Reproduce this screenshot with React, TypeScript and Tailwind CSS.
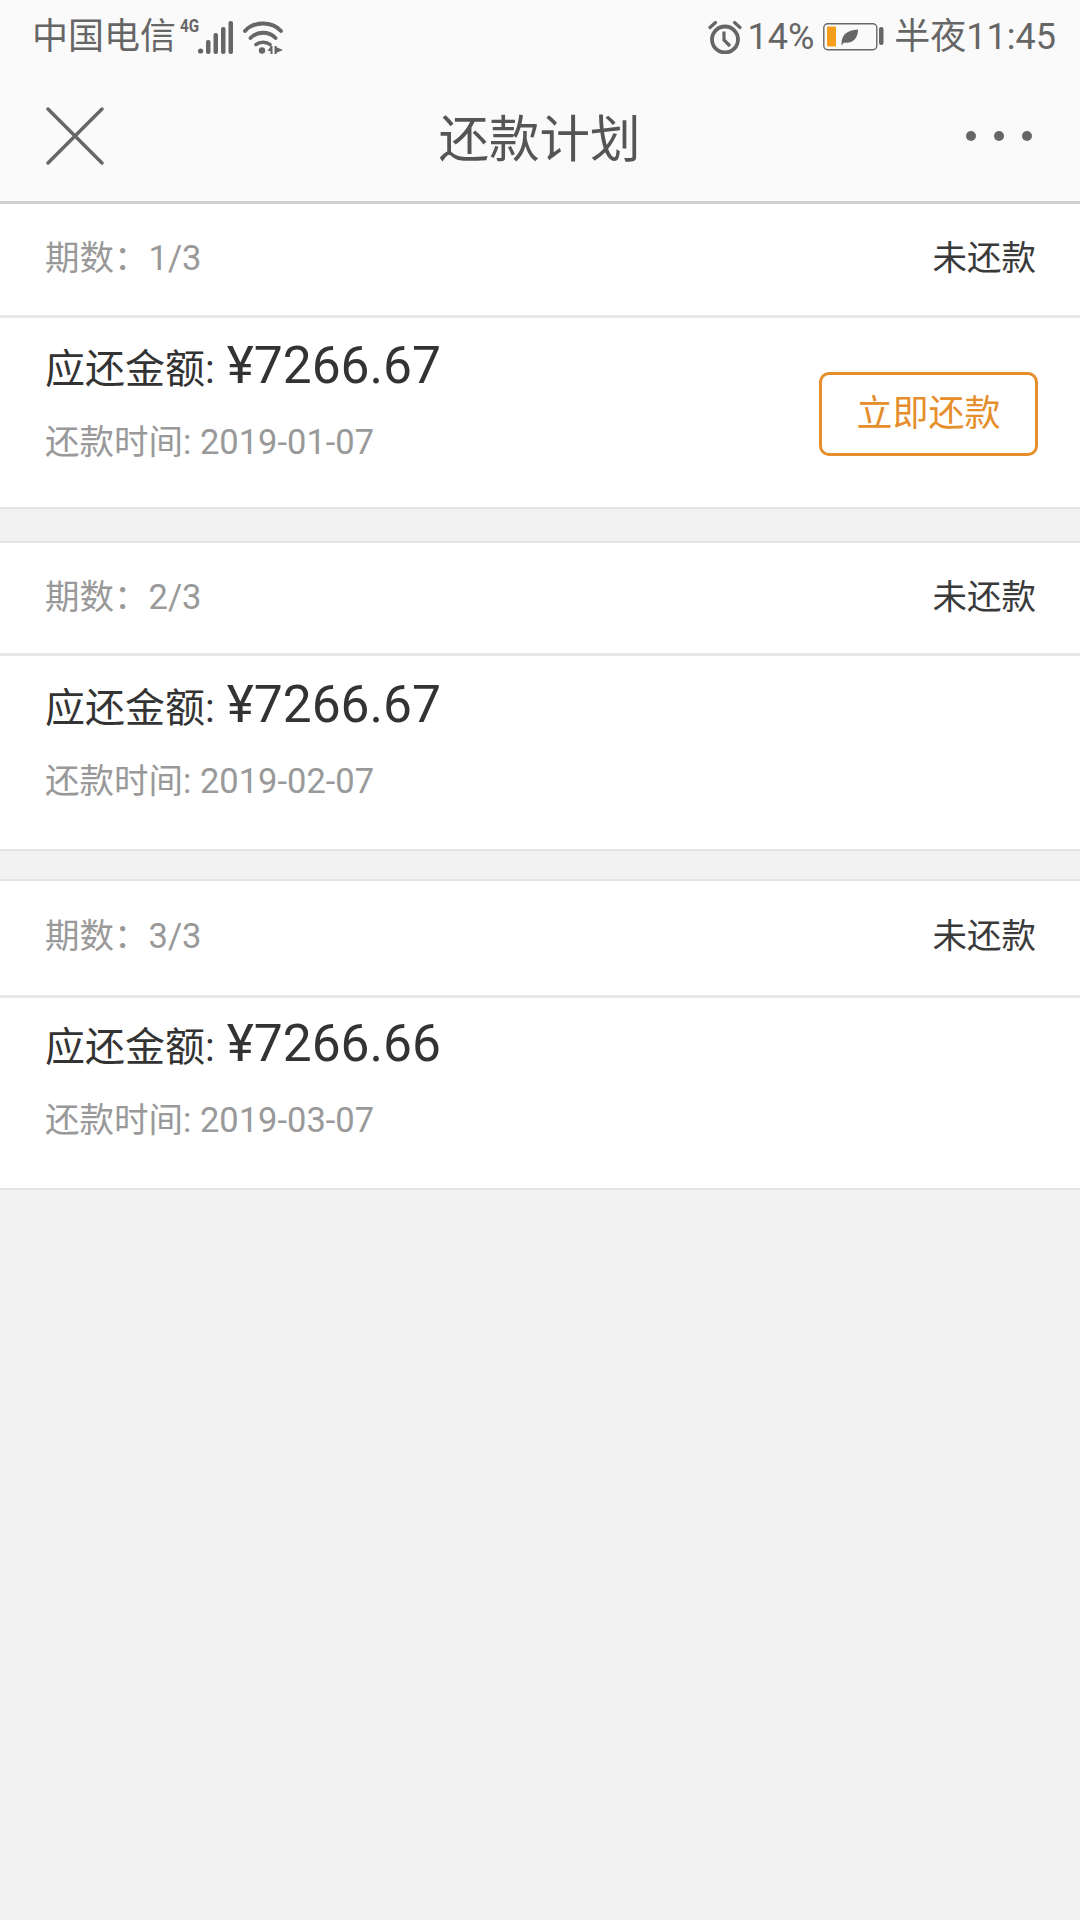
const font = "font-['Roboto','Noto_Sans_CJK_SC',sans-serif]";

function SignalIcon() {
  return (
    <svg width="35" height="33" viewBox="0 0 35 33" fill="#666">
      <circle cx="2.6" cy="30" r="2.6" />
      <rect x="8" y="19" width="4.5" height="14" rx="2" />
      <rect x="15.5" y="12" width="4.5" height="21" rx="2" />
      <rect x="23" y="6" width="4.5" height="27" rx="2" />
      <rect x="30.5" y="0" width="4.5" height="33" rx="2" />
    </svg>
  );
}

function WifiIcon() {
  return (
    <svg width="40" height="34" viewBox="0 0 40 34" fill="none" stroke="#666" strokeLinecap="round">
      <path d="M2 11C11 1 29 1 38 11" strokeWidth="3.8" />
      <path d="M7.5 18C14 11 26 11 32.5 18" strokeWidth="3.8" />
      <path d="M13 24.5C16.5 21.5 23.5 21.5 27 24.5" strokeWidth="3.6" />
      <circle cx="19" cy="30.5" r="3.2" fill="#666" stroke="none" />
      <path d="M28.5 26V34" strokeWidth="2" strokeLinecap="butt" />
      <path d="M32.5 26V34" strokeWidth="2" strokeLinecap="butt" />
      <path d="M24.5 31L28 26V31ZM33 27L40 30L33 33Z" fill="#666" stroke="none" />
    </svg>
  );
}

function AlarmIcon() {
  return (
    <svg width="34" height="33" viewBox="0 0 34 33" fill="none" stroke="#666">
      <circle cx="17" cy="18.5" r="13" strokeWidth="3.8" />
      <path d="M16 10.5V19L22 25" strokeWidth="3.2" />
      <path d="M2 6.5L7.5 1.5M32 6.5L26.5 1.5" strokeWidth="3.2" strokeLinecap="round" />
    </svg>
  );
}

function BatteryIcon() {
  return (
    <svg width="61" height="28" viewBox="0 0 61 28" fill="none">
      <rect x="0.8" y="0.8" width="53" height="26" rx="4" stroke="#666" strokeWidth="1.4" />
      <rect x="4" y="3.5" width="9" height="20" rx="1" fill="#f59e1b" />
      <path d="M18.5 21C18.5 12 24 7 35 6.5C35 15 30 21 21 19.5L18.5 22.5Z" fill="#666" />
      <rect x="56" y="4" width="4.5" height="18" rx="2" fill="#666" />
    </svg>
  );
}

function CloseIcon() {
  return (
    <svg width="58" height="58" viewBox="0 0 58 58" fill="none" stroke="#666" strokeWidth="3.4" strokeLinecap="round">
      <path d="M2 2L56 56M56 2L2 56" />
    </svg>
  );
}

interface Plan {
  period: string;
  amount: string;
  date: string;
  pay?: boolean;
  head: string;
  body: string;
  offset: string;
}

// row heights are not quite even in the screenshot, so each card carries its own
const plans: Plan[] = [
  { period: '1/3', amount: '¥7266.67', date: '2019-01-07', pay: true, head: 'h-[114px] pt-[34px]', body: 'h-[191px]', offset: 'pt-[21px]' },
  { period: '2/3', amount: '¥7266.67', date: '2019-02-07', head: 'h-[113px] pt-[34px]', body: 'h-[195px]', offset: 'pt-[22px]' },
  { period: '3/3', amount: '¥7266.66', date: '2019-03-07', head: 'h-[117px] pt-[35px]', body: 'h-[192px]', offset: 'pt-[19px]' },
];

function PlanCard({ plan }: { plan: Plan }) {
  return (
    <div className="bg-white">
      <div className={`${plan.head} pl-[45px] pr-[44px] flex items-start justify-between border-b-[3px] border-[#e8e8e8]`}>
        <span className="text-[34.5px] leading-[40px] text-[#999]">期数：{plan.period}</span>
        <span className="text-[34.5px] leading-[40px] text-[#3a3a3a]">未还款</span>
      </div>
      <div className={`${plan.body} pl-[45px] pr-[42px] flex items-start justify-between border-b-2 border-[#e4e4e4]`}>
        <div className={`${plan.offset} flex flex-col`}>
          <div className="flex items-baseline text-[#333]">
            <span className="text-[40px] leading-[54px]">应还金额:</span>
            <span className="text-[51.5px] leading-[54px] ml-[12px]">{plan.amount}</span>
          </div>
          <div className="text-[34.5px] leading-[40px] text-[#999] mt-[25px]">
            还款时间: {plan.date}
          </div>
        </div>
        {plan.pay && (
          <button className="w-[219px] h-[84px] mt-[54px] border-[3px] border-[#e58e2b] rounded-[10px] text-[36px] text-[#e58e2b] flex items-center justify-center">
            立即还款
          </button>
        )}
      </div>
    </div>
  );
}

export default function App() {
  return (
    <div className={`${font} w-[1080px] h-[1920px] bg-[#f1f1f1] flex flex-col`}>
      {/* Header */}
      <div className="h-[204px] shrink-0 bg-[#fafafa] border-b-[3px] border-[#cfcfcf] text-[#666]">
        <div className="h-[74px] pl-[32px] pr-[24px] flex items-center justify-between text-[36px]">
          <div className="flex items-center">
            <span>中国电信</span>
            <span className="w-[18px] ml-[4px] self-start mt-[6px] text-[19px] font-bold leading-none whitespace-nowrap origin-left scale-x-[0.8]">4G</span>
            <span className="flex"><SignalIcon /></span>
            <span className="ml-[10px] flex"><WifiIcon /></span>
          </div>
          <div className="flex items-center">
            <AlarmIcon />
            <span className="ml-[6px]">14%</span>
            <span className="ml-[9px] flex"><BatteryIcon /></span>
            <span className="ml-[10px]">半夜11:45</span>
          </div>
        </div>
        <div className="h-[127px] pl-[46px] pr-[48px] flex items-center justify-between">
          <span className="flex mt-[-4px]"><CloseIcon /></span>
          <span className="text-[50.5px] text-[#555] mt-[5px] ml-[9px]">还款计划</span>
          <div className="w-[66px] flex justify-between mt-[-4px]">
            <span className="w-[10px] h-[10px] rounded-full bg-[#666]" />
            <span className="w-[10px] h-[10px] rounded-full bg-[#666]" />
            <span className="w-[10px] h-[10px] rounded-full bg-[#666]" />
          </div>
        </div>
      </div>

      {/* Plans */}
      <PlanCard plan={plans[0]} />
      <div className="mt-[32px] border-t-2 border-[#e4e4e4]">
        <PlanCard plan={plans[1]} />
      </div>
      <div className="mt-[28px] border-t-2 border-[#e4e4e4]">
        <PlanCard plan={plans[2]} />
      </div>
    </div>
  );
}
